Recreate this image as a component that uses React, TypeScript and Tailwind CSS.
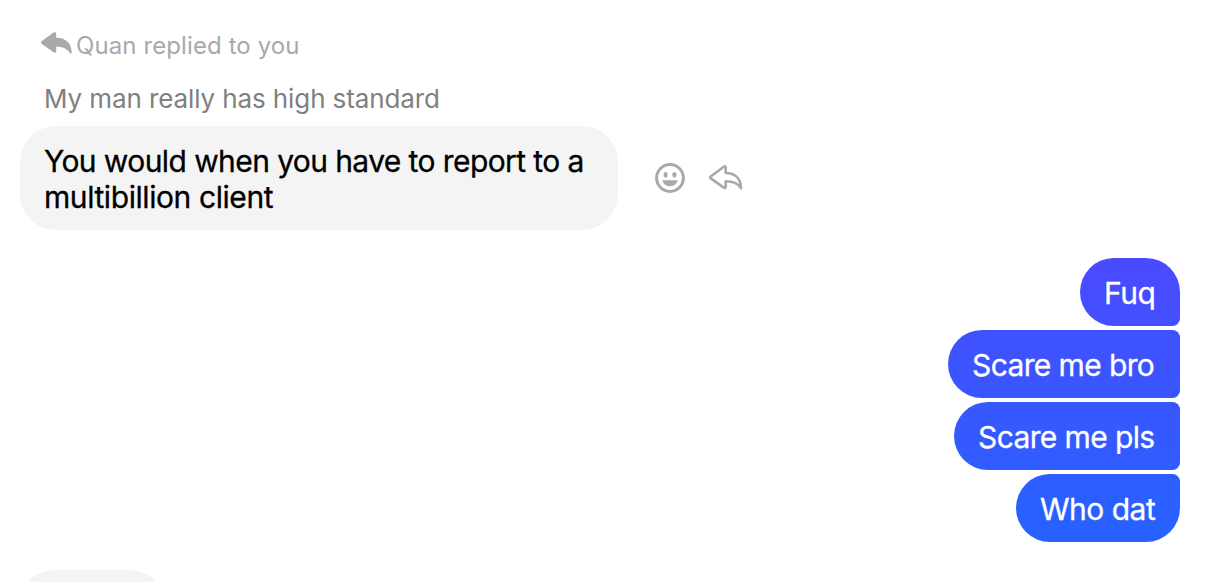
import { clsx } from "clsx";

type OutgoingMessage = { text: string; className: string };

const OUTGOING: OutgoingMessage[] = [
  {
    text: "Fuq",
    className: "w-[100px] rounded-tr-[36px] rounded-br-lg from-[#4a4aff] to-[#4350ff] tracking-[-0.5px]",
  },
  {
    text: "Scare me bro",
    className: "w-[232px] rounded-r-lg from-[#4051ff] to-[#3a56ff] tracking-[-0.62px]",
  },
  {
    text: "Scare me pls",
    className: "w-[226px] rounded-r-lg from-[#3857ff] to-[#305cff] tracking-[-0.62px]",
  },
  {
    text: "Who dat",
    className: "w-[164px] rounded-tr-lg rounded-br-[36px] from-[#2e5dff] to-[#2662ff] tracking-[-0.5px]",
  },
];

function RepliedIcon() {
  return (
    <svg width="32" height="24" viewBox="0 0 32 24" className="shrink-0" fill="#a9a9a9">
      <path d="M.8 9.1 12.6.6C14-.3 15.2.3 15.2 1.9V5.8C23.8 6 30.2 9.8 30.7 20.2C30.8 21.8 29.6 22 28.7 20.8C25.7 16.4 21.4 14.8 15.2 14.8V18.9C15.2 20.6 14 21.1 12.6 20.2L.8 12C-.3 11.1-.3 10 .8 9.1Z" />
    </svg>
  );
}

function SmileIcon() {
  return (
    <svg width="30" height="30" viewBox="0 0 30 30" fill="none">
      <circle cx="15" cy="15" r="13.4" stroke="#a9a9a9" strokeWidth="3" />
      <ellipse cx="10.6" cy="11.8" rx="2" ry="2.8" fill="#a9a9a9" />
      <ellipse cx="19.4" cy="11.8" rx="2" ry="2.8" fill="#a9a9a9" />
      <path d="M8.3 17.2H21.7C22.4 17.2 22.6 17.7 22.4 18.3C21.2 21.6 18.3 23.3 15 23.3S8.8 21.6 7.6 18.3C7.4 17.7 7.6 17.2 8.3 17.2Z" fill="#a9a9a9" />
    </svg>
  );
}

function ReplyIcon() {
  return (
    <svg width="34" height="26" viewBox="0.5 0 34 26" fill="none" stroke="#a9a9a9" strokeWidth="2.6" strokeLinejoin="round">
      <path d="M1.9 11.7 15.3 1.8Q17.2.7 17.2 2.8V8C25.8 8.1 32.2 12.8 32.6 23.2C29.3 18.2 24.9 16.3 17.2 16.3V21.7Q17.2 23.7 15.3 22.6L1.9 13.1Q1 12.4 1.9 11.7Z" />
    </svg>
  );
}

export default function App() {
  return (
    <main className="h-[582px] w-[1212px] overflow-hidden bg-white font-['Inter',sans-serif]">
      <div className="flex h-[126px] flex-col pt-8">
        <div className="flex h-7 items-center pl-[41px]">
          <div className="-mt-[5px] mr-[3px]">
            <RepliedIcon />
          </div>
          <span className="whitespace-nowrap text-[24px] leading-7 tracking-[0.1px] text-[#a9a9a9]">
            Quan replied to you
          </span>
        </div>
        <p className="mt-[23px] pl-11 text-[26px] leading-8 tracking-[-0.1px] whitespace-nowrap text-[#808080]">
          My man really has high standard
        </p>
      </div>

      <div className="flex items-center pl-5">
        <div className="h-[104px] w-[598px] rounded-[36px] bg-[#f4f4f4] pt-[17px] pl-6 text-[30px] leading-9 whitespace-nowrap text-black [-webkit-text-stroke:0.3px]">
          <p className="tracking-[-0.59px]">You would when you have to report to a</p>
          <p className="tracking-[-0.42px]">multibillion client</p>
        </div>
        <div className="ml-[37px] flex items-center gap-6">
          <SmileIcon />
          <ReplyIcon />
        </div>
      </div>

      <div className="mt-7 flex flex-col items-end gap-1 pr-8">
        {OUTGOING.map((m) => (
          <div
            key={m.text}
            className={clsx(
              "h-[68px] rounded-l-[36px] bg-linear-to-b pt-[17px] pl-6 text-[30px] leading-9 whitespace-nowrap text-white [-webkit-text-stroke:0.3px]",
              m.className
            )}
          >
            {m.text}
          </div>
        ))}
      </div>

      {/* next incoming bubble, cut off by the window */}
      <div className="mt-7 ml-5 h-[68px] w-36 rounded-[34px] bg-[#f4f4f4]" />
    </main>
  );
}
